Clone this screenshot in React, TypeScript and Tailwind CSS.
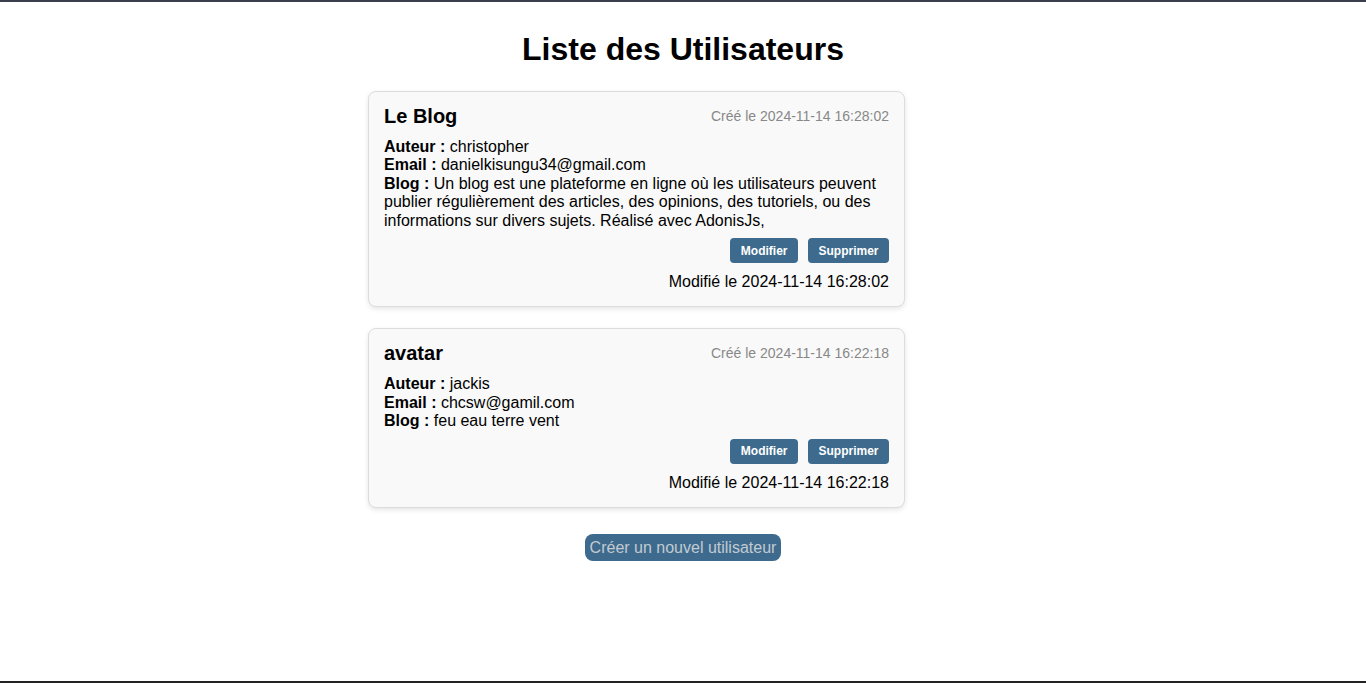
const posts = [
  {
    title: "Le Blog",
    created: "2024-11-14 16:28:02",
    updated: "2024-11-14 16:28:02",
    author: "christopher",
    email: "danielkisungu34@gmail.com",
    blog: "Un blog est une plateforme en ligne où les utilisateurs peuvent publier régulièrement des articles, des opinions, des tutoriels, ou des informations sur divers sujets. Réalisé avec AdonisJs,",
  },
  {
    title: "avatar",
    created: "2024-11-14 16:22:18",
    updated: "2024-11-14 16:22:18",
    author: "jackis",
    email: "chcsw@gamil.com",
    blog: "feu eau terre vent",
  },
];

function PostCard({ post }: { post: (typeof posts)[number] }) {
  return (
    <div className="w-[537px] rounded-lg border border-[#dcdcdc] bg-[#f9f9f9] px-[15px] pt-[13px] pb-[15px] shadow-[0_2px_5px_rgba(0,0,0,0.1)]">
      <div className="flex items-center justify-between">
        <h3 className="text-[20px] font-bold leading-[23px] text-black">{post.title}</h3>
        <span className="text-[14px] text-[#888]">Créé le {post.created}</span>
      </div>

      <div className="mt-[10px] text-[16px] leading-[18.4px] text-black">
        <div>
          <strong>Auteur :</strong> {post.author}
        </div>
        <div>
          <strong>Email :</strong> {post.email}
        </div>
        <div>
          <strong>Blog :</strong> {post.blog}
        </div>
      </div>

      <div className="mt-[8px] flex justify-end gap-[10px]">
        <button className="h-[25px] rounded-[4px] bg-[#3d6a8d] px-[10.5px] text-[12px] font-bold text-white">
          Modifier
        </button>
        <button className="h-[25px] rounded-[4px] bg-[#3d6a8d] px-[10.5px] text-[12px] font-bold text-white">
          Supprimer
        </button>
      </div>

      <div className="mt-[10px] text-right text-[16px] leading-[18.4px] text-black">
        Modifié le {post.updated}
      </div>
    </div>
  );
}

export default function App() {
  return (
    <div
      className="flex h-[683px] flex-col border-t-2 border-[#3b3e4b] bg-white"
      style={{ fontFamily: '"Liberation Sans", Arial, sans-serif' }}
    >
      <main className="flex flex-1 flex-col items-center pt-[29px]">
        <h1 className="text-[32px] font-bold leading-[37px] text-black">
          Liste des Utilisateurs
        </h1>

        {/* cards sit left-aligned in a wider centered column */}
        <div className="mt-[23px] flex w-[630px] flex-col items-start gap-[21px]">
          {posts.map((p) => (
            <PostCard key={p.title} post={p} />
          ))}
        </div>

        <button className="mt-[26px] h-[27px] rounded-lg bg-[#3d6a8d] px-[5px] text-[16px] text-[#c3cad2]">
          Créer un nouvel utilisateur
        </button>
      </main>
      <div className="h-[2px] bg-[#222]" />
    </div>
  );
}
